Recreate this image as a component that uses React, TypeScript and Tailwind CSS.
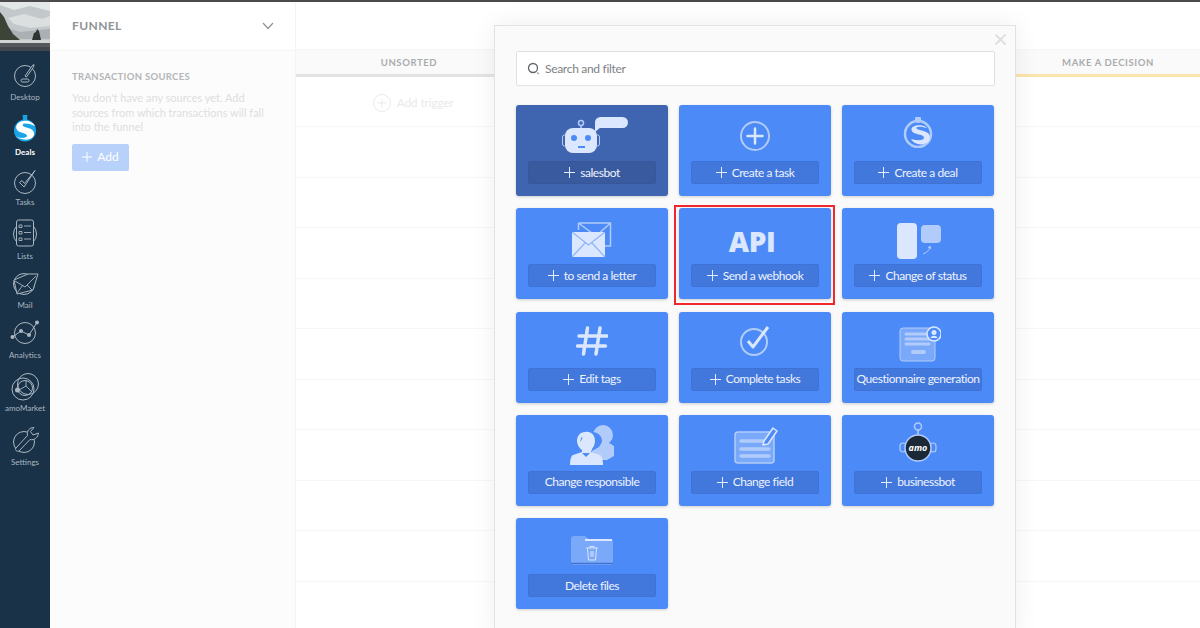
import type { ReactNode } from "react";

const LIGHT = "#dbe7fe";
const MID = "#b1cbfb";

function Glyph({ size = 34, children, w, h }: { size?: number; w?: number; h?: number; children: ReactNode }) {
  const vw = w ?? size;
  const vh = h ?? size;
  return <svg width={vw} height={vh} viewBox={`0 0 ${vw} ${vh}`} fill="none">{children}</svg>;
}

// left rail icons, all thin outline on the navy
const RAIL = "#a9b7c2";
const railIcons: Record<string, ReactNode> = {
  Desktop: (
    <Glyph>
      <circle cx="17" cy="19" r="10.500" stroke={RAIL} strokeWidth="1" />
      <path d="M17 19 24 9 26 7.500 25.500 10 18.500 20Z" fill="#1a3247" stroke={RAIL} strokeWidth="1" />
      <rect x="13" y="22" width="8" height="3" rx="1.500" stroke={RAIL} />
    </Glyph>
  ),
  Deals: (
    <Glyph>
      <path d="M14.500 3h5l-.5 3 .5 2h-5l.5-2Z" fill="#19a5e6" />
      <circle cx="17" cy="18.500" r="11" fill="#19a5e6" />
      <path d="M7 24c4 3 13 6 18 1 3-4 0-8-5-9-4-1-6-2-5-4 1-1 6-1 12 2-2-4-7-6-12-5-6 1-9 6-5 10 3 2 9 2 9 5 0 2-7 3-12 0Z" fill="#ffffff" />
    </Glyph>
  ),
  Tasks: (
    <Glyph>
      <g transform="translate(2 3)">
        <circle cx="15" cy="18" r="10.500" stroke={RAIL} />
        <path d="M9.500 17.500 14 22 25 5.500 14.500 18.500 12 15.500Z" stroke={RAIL} strokeLinejoin="round" />
      </g>
    </Glyph>
  ),
  Lists: (
    <Glyph>
      <circle cx="17" cy="18" r="11.500" stroke={RAIL} />
      <rect x="8.500" y="4" width="17" height="26" rx="2" fill="#1a3247" stroke={RAIL} />
      <path d="M11 9h3v2.500h-3ZM11 15.500h3v2.500h-3ZM11 22h3v2.500h-3ZM16 10h7M16 16.500h7M16 23h7" stroke={RAIL} strokeWidth=".9" />
    </Glyph>
  ),
  Mail: (
    <Glyph>
      <g transform="translate(0 3)">
        <circle cx="16" cy="16" r="10.500" stroke={RAIL} />
        <path d="M6 12 20 6h10L25 22 9 26Z" fill="#1a3247" stroke={RAIL} strokeLinejoin="round" />
        <path d="M7 13 17 19 28 8M9 25 15 17M24 22 19 17" stroke={RAIL} strokeWidth=".9" />
      </g>
    </Glyph>
  ),
  Analytics: (
    <Glyph>
      <g transform="translate(0 3)">
        <circle cx="17" cy="15" r="10.500" stroke={RAIL} />
        <path d="M4.500 19 13 13 21 17 29 4.500" stroke={RAIL} />
        <circle cx="4.500" cy="19" r="2" fill={RAIL} />
        <circle cx="13" cy="13" r="2" fill={RAIL} />
        <circle cx="21" cy="17" r="2" fill={RAIL} />
        <circle cx="29" cy="4.500" r="2" fill={RAIL} />
      </g>
    </Glyph>
  ),
  amoMarket: (
    <Glyph>
      <g transform="translate(0 2)">
        <circle cx="15" cy="19" r="11" stroke={RAIL} />
        <circle cx="20" cy="14" r="10.500" stroke={RAIL} />
        <circle cx="17" cy="18" r="7.500" stroke={RAIL} />
        <path d="M11 20 18 16 23 21M18 16V10" stroke={RAIL} strokeWidth=".9" />
        <circle cx="9.500" cy="20" r="2.500" fill={RAIL} />
      </g>
    </Glyph>
  ),
  Settings: (
    <Glyph>
      <g transform="translate(1 1)">
        <circle cx="15" cy="19" r="10.500" stroke={RAIL} />
        <path d="M7 25 18.500 12.500C17.500 8 20.500 4.500 25 4.500L21.500 8.500 24 12 29.500 10C29 14.500 25.500 17.500 21 16.500L10 28C8 29 5.500 27 7 25Z" fill="#1a3247" stroke={RAIL} strokeLinejoin="round" />
      </g>
    </Glyph>
  ),
};

const rail = [
  { label: "Desktop", item: "h-[61px] pt-[6px]", text: "text-[#a9b7c2]" },
  { label: "Deals", item: "h-[50px]", text: "text-white font-bold" },
  { label: "Tasks", item: "h-[54px]", text: "text-[#a9b7c2]" },
  { label: "Lists", item: "h-[49px]", text: "text-[#a9b7c2]" },
  { label: "Mail", item: "h-[50px]", text: "text-[#a9b7c2]" },
  { label: "Analytics", item: "h-[53px]", text: "text-[#a9b7c2]" },
  { label: "amoMarket", item: "h-[54px]", text: "text-[#a9b7c2]" },
  { label: "Settings", item: "h-[50px]", text: "text-[#a9b7c2]" },
];

const cardIcons: Record<string, ReactNode> = {
  robot: (
    <Glyph w={66} h={37}>
      <rect x="33" y="0" width="33" height="11" rx="5.500" fill={LIGHT} />
      <path d="M33 6v9l6-5Z" fill={LIGHT} />
      <circle cx="19" cy="6" r="2.500" stroke={MID} strokeWidth="1.500" />
      <path d="M19 9v3" stroke={MID} strokeWidth="1.500" />
      <rect x="0.500" y="18" width="4" height="11" rx="2" stroke={MID} />
      <rect x="33.500" y="18" width="4" height="11" rx="2" stroke={MID} />
      <rect x="3" y="11" width="32" height="25" rx="8" fill={LIGHT} />
      <circle cx="12" cy="21" r="3" fill="#4c8bf7" />
      <circle cx="26" cy="21" r="3" fill="#4c8bf7" />
      <rect x="16" y="29" width="7" height="2" fill="#4c8bf7" />
    </Glyph>
  ),
  plus: (
    <Glyph w={32} h={32}>
      <circle cx="16" cy="16" r="14" stroke={MID} strokeWidth="2" />
      <path d="M16 8.500v15M8.500 16h15" stroke={LIGHT} strokeWidth="2.500" strokeLinecap="round" />
    </Glyph>
  ),
  dollar: (
    <Glyph w={30} h={31}>
      <rect x="12" y="0" width="6" height="4" rx="1" fill={MID} />
      <rect x="13.500" y="3" width="3" height="3" fill={MID} />
      <circle cx="15" cy="17" r="13" stroke={MID} strokeWidth="2.500" />
      <path d="M23 10C18 7 8 8 8.500 13c.5 5 12 3.500 12.500 7.500.3 3-6 3.500-13 1.500 3 6 13 7.500 18 2 3-6-1-9-7-10.500-4-1-6-1.500-5.500-3 .5-1 5-1.500 10 .5Z" fill={LIGHT} />
    </Glyph>
  ),
  letter: (
    <Glyph w={40} h={36}>
      <path d="M6.500 1h32v23h-6M6.500 1v7M6.500 1 24 14 38.500 1" stroke={MID} strokeWidth="1.500" />
      <rect x="0" y="10" width="33" height="25" fill={LIGHT} />
      <path d="M0 10 16.500 23 33 10M0 35 13 21M33 35 20 21" stroke="#8fb4f9" strokeWidth="1.200" />
    </Glyph>
  ),
  api: <span className="font-['Open_Sans',sans-serif] text-[28px] font-extrabold leading-none tracking-[-0.5px] text-[#dbe7fe]">API</span>,
  status: (
    <Glyph w={44} h={36}>
      <rect x="0" y="0" width="20" height="36" rx="4" fill={LIGHT} />
      <rect x="24" y="2" width="20" height="18" rx="4" fill={MID} />
      <path d="M26 31c3-1 6-3 7-7M31 25l2-2 1 3" stroke={MID} strokeWidth="1" />
    </Glyph>
  ),
  hash: (
    <Glyph w={32} h={30}>
      <path d="M11.500 2 7.500 28M24 2 20 28M3 10h28M1.500 20h28" stroke={LIGHT} strokeWidth="3.500" strokeLinecap="round" />
    </Glyph>
  ),
  check: (
    <Glyph w={32} h={30}>
      <circle cx="15" cy="16" r="13" stroke={MID} strokeWidth="2" />
      <path d="M9 15 14 21 29 1" stroke={LIGHT} strokeWidth="3" strokeLinejoin="round" />
    </Glyph>
  ),
  form: (
    <Glyph w={42} h={36}>
      <rect x="1" y="2" width="35" height="33" rx="3" fill="#7ba9f9" stroke={MID} strokeWidth="1" />
      <path d="M7 8h21M7 13h23M7 18h23" stroke={MID} strokeWidth="3" strokeLinecap="round" />
      <rect x="12" y="24" width="15" height="4" rx="2" fill={MID} />
      <circle cx="35" cy="8" r="7" fill="#4c8bf7" stroke={LIGHT} strokeWidth="1.500" />
      <circle cx="35" cy="6.500" r="2.500" fill={LIGHT} />
      <path d="M31.500 12c1-3 6-3 7 0Z" fill={LIGHT} />
    </Glyph>
  ),
  people: (
    <Glyph w={44} h={40}>
      <circle cx="33" cy="10" r="10" fill={MID} />
      <path d="M30 16h6l8 5v10l-7 4H26l-6-12Z" fill={MID} />
      <path d="M22 7c6 0 10 4 10 9 0 2-2 4-3 6l-7 4Z" fill="#4c8bf7" />
      <path d="M15 7c6-1 10 3 10 9 0 4-2 7-4 9v2l9 3c2 1 3 5 3 10H0c0-5 1-9 3-10l9-3v-2c-3-2-5-6-5-9 0-5 3-9 8-9Z" fill={LIGHT} />
      <path d="M10 17c1-3 1-5 2-5s0 3-2 5ZM16 32l-4-4h8Z" fill="#4c8bf7" />
    </Glyph>
  ),
  field: (
    <Glyph w={44} h={38}>
      <rect x="1" y="6" width="39" height="31" rx="3" fill="#7ba9f9" stroke={MID} strokeWidth="1.500" />
      <path d="M7 15h22M7 23h28M7 30h28" stroke={MID} strokeWidth="3.500" strokeLinecap="round" />
      <path d="M30 15 39 2l4 3-9 13-5 1Z" fill="#4c8bf7" stroke={LIGHT} strokeWidth="1.500" strokeLinejoin="round" />
    </Glyph>
  ),
  amo: (
    <Glyph w={38} h={42}>
      <circle cx="19" cy="4.500" r="3.500" stroke={MID} strokeWidth="1.500" />
      <path d="M19 8v6" stroke={MID} strokeWidth="1.500" />
      <rect x="1" y="21" width="6" height="9" rx="3" stroke={MID} strokeWidth="1.200" />
      <rect x="31" y="21" width="6" height="9" rx="3" stroke={MID} strokeWidth="1.200" />
      <circle cx="19" cy="26" r="13" fill="#1b2a36" stroke={MID} strokeWidth="1.500" />
      <text x="19" y="29" textAnchor="middle" fontSize="9" fontWeight="700" fontStyle="italic" fill="#fff" fontFamily="'Open Sans', sans-serif">amo</text>
    </Glyph>
  ),
  folder: (
    <Glyph w={42} h={29}>
      <path d="M0 3q0-3 3-3h11l4 3h21q3 0 3 3v21q0 2-2 2H2q-2 0-2-2Z" fill="#7ba9f9" />
      <path d="M0 27.500h42" stroke="#3f72d4" strokeWidth="1.500" />
      <path d="M14 4h27" stroke={LIGHT} strokeWidth="2" />
      <path d="M15 12h12M19 12v-1.500h4V12M16.500 12.500l1 11.500h7l1-11.500M20 15v6M22 15v6" stroke={LIGHT} strokeWidth="1" />
    </Glyph>
  ),
};

const cards = [
  { icon: "robot", label: "salesbot", plus: true, dark: true, iconClass: "pl-[6px] pt-[12px]" },
  { icon: "plus", label: "Create a task", plus: true, iconClass: "pt-[15px]" },
  { icon: "dollar", label: "Create a deal", plus: true, iconClass: "pt-[12px]" },
  { icon: "letter", label: "to send a letter", plus: true, iconClass: "pt-[14px]" },
  { icon: "api", label: "Send a webhook", plus: true, marked: true, iconClass: "pt-[19px] pr-[6px]" },
  { icon: "status", label: "Change of status", plus: true, iconClass: "pt-[15px] pl-[2px]" },
  { icon: "hash", label: "Edit tags", plus: true, iconClass: "pt-[14px]" },
  { icon: "check", label: "Complete tasks", plus: true, iconClass: "pt-[14px]" },
  { icon: "form", label: "Questionnaire generation", plus: false, iconClass: "pt-[14px] pl-[4px]" },
  { icon: "people", label: "Change responsible", plus: false, iconClass: "pt-[10px]" },
  { icon: "field", label: "Change field", plus: true, iconClass: "pt-[11px] pl-[2px]" },
  { icon: "amo", label: "businessbot", plus: true, iconClass: "pt-[7px]" },
  { icon: "folder", label: "Delete files", plus: false, iconClass: "pt-[18px]" },
];

function Card({ icon, label, plus, dark, marked, iconClass }: (typeof cards)[number] & { dark?: boolean; marked?: boolean }) {
  return (
    <div className={`relative flex h-[91px] flex-col justify-between rounded-[3px] px-[12px] pb-[12px] shadow-[0_1px_3px_rgba(0,0,0,0.18)] ${dark ? "bg-[#4065b0]" : "bg-[#4c8bf7]"}`}>
      <div className={`flex justify-center ${iconClass}`}>{cardIcons[icon]}</div>
      <div className={`flex h-[23px] items-center justify-center gap-[5px] rounded-[2px] border text-[12px] tracking-[-0.45px] text-[#eef3fe] ${dark ? "border-[#38579a] bg-[#3a5a9f]" : "border-[#3f72d6] bg-[#4277dc]"}`}>
        {plus && (
          <svg width="11" height="11" viewBox="0 0 11 11">
            <path d="M5.500 0v11M0 5.500h11" stroke="#e4ecfd" strokeWidth="1" />
          </svg>
        )}
        <span className="whitespace-nowrap">{label}</span>
      </div>
      {marked && <div className="absolute -left-[5px] -right-[4px] -top-[3px] -bottom-[6px] border-2 border-[#f0282d]" />}
    </div>
  );
}

export default function App() {
  return (
    <div className="relative h-[628px] w-[1200px] overflow-hidden bg-white font-['Lato','Liberation_Sans',sans-serif]">
      <div className="h-[2px] bg-[#4a4a4a]" />
      <div className="flex h-[626px]">
        {/* rail */}
        <div className="flex w-[50px] shrink-0 flex-col bg-[#1a3247]">
          <svg width="50" height="49" viewBox="0 0 50 49" className="shrink-0">
            <rect width="50" height="49" fill="#c3c8ca" />
            <path d="M0 3 14 8 30 4 50 9V0H0Z" fill="#e4e7e8" />
            <path d="M8 16 24 12 42 17 50 14V24L30 26 14 22Z" fill="#dcdfe0" />
            <path d="M0 24 20 30 50 27V37H0Z" fill="#aab0b3" />
            <path d="M0 10 4 15 8 24 13 32 20 38H0Z" fill="#3c4437" />
            <path d="M32 38 34 31 36 30 37 27 39 29 41 38Z" fill="#2e3334" />
            <rect y="38" width="50" height="3" fill="#d0d4d5" />
            <rect y="41" width="50" height="8" fill="#55585c" />
            <rect y="45" width="50" height="4" fill="#43464a" />
          </svg>
          {rail.map((r) => (
            <div key={r.label} className={`flex flex-col items-center ${r.item}`}>
              <div className="h-[34px] w-[34px] shrink-0">{railIcons[r.label]}</div>
              <span className={`mt-[1px] whitespace-nowrap text-[8px] leading-[10px] ${r.text}`}>{r.label}</span>
            </div>
          ))}
        </div>

        {/* funnel panel */}
        <div className="flex w-[246px] shrink-0 flex-col border-r border-[#f2f3f4] bg-[#fcfcfc]">
          <div className="flex h-[49px] shrink-0 items-center justify-between border-b border-[#f4f5f5] bg-white pl-[22px] pr-[21px]">
            <span className="text-[12px] font-bold tracking-[0.4px] text-[#8f9396]">FUNNEL</span>
            <svg width="12" height="8" viewBox="0 0 12 8" fill="none"><path d="M1 1 6 6.500 11 1" stroke="#8f9396" strokeWidth="1.200" /></svg>
          </div>
          <div className="px-[22px] pt-[20px]">
            <div className="whitespace-nowrap text-[9.500px] font-bold leading-[12px] tracking-[0.3px] text-[#b3b6b8]">TRANSACTION SOURCES</div>
            <p className="mt-[8px] w-[205px] text-[11px] leading-[14.500px] text-[#dcdee0]">You don't have any sources yet. Add sources from which transactions will fall into the funnel</p>
            <div className="mt-[9px] flex h-[27px] w-[57px] items-center justify-center gap-[5px] rounded-[2px] bg-[#b8d1fb] text-[12px] text-white">
              <svg width="10" height="10" viewBox="0 0 10 10"><path d="M5 0v10M0 5h10" stroke="#fff" strokeWidth="1" /></svg>
              Add
            </div>
          </div>
        </div>

        {/* board */}
        <div className="flex min-w-0 flex-1 flex-col">
          <div className="h-[48px] shrink-0 border-b border-[#f6f6f6] bg-white" />
          <div className="flex h-[27px] shrink-0 bg-[#fafafa] text-[9.500px] font-bold tracking-[0.6px] text-[#a9acae]">
            <div className="flex w-[226px] items-center justify-center border-b-[3px] border-[#e3e3e3] pt-[2px]">UNSORTED</div>
            <div className="flex-1 border-b-[3px] border-[#e3e3e3]" />
            <div className="flex w-[184px] items-center justify-center border-b-[3px] border-[#fde3ae] pt-[2px]">MAKE A DECISION</div>
          </div>
          <div className="flex h-[50px] shrink-0 items-center border-b border-[#f7f7f7] pl-[77px] pt-[2px] text-[11.500px] text-[#e8e9ea]">
            <svg width="18" height="18" viewBox="0 0 18 18" fill="none" className="mr-[6px]">
              <circle cx="9" cy="9" r="8.500" stroke="#e8e9ea" />
              <path d="M9 4.500v9M4.500 9h9" stroke="#e8e9ea" />
            </svg>
            Add trigger
          </div>
          {[0, 1, 2, 3, 4, 5, 6, 7, 8].map((i) => (
            <div key={i} className="h-[50.500px] shrink-0 border-b border-[#f7f7f7]" />
          ))}
        </div>
      </div>

      {/* add-action dialog */}
      <div className="absolute left-[494px] top-[25px] h-[610px] w-[522px] border border-[#e0e3e3] bg-[#fafafa] px-[21px] pt-[25px] shadow-[0_0_24px_rgba(0,0,0,0.07)]">
        <svg width="11" height="11" viewBox="0 0 11 11" className="absolute right-[9px] top-[8px]">
          <path d="M.5.500l10 10M10.500.500l-10 10" stroke="#dcdcdc" strokeWidth="1.800" />
        </svg>
        <div className="flex h-[35px] w-[479px] items-center gap-[4px] rounded-[2px] border border-[#dfe1e2] bg-white pl-[10px] text-[12px] tracking-[-0.3px] text-[#7d8285]">
          <svg width="14" height="14" viewBox="0 0 14 14" fill="none">
            <circle cx="6" cy="6" r="4.500" stroke="#5f6468" strokeWidth="1.300" />
            <path d="M10 10.500l2 1.500" stroke="#9ea2a5" strokeWidth="1.200" />
          </svg>
          Search and filter
        </div>
        <div className="mt-[19.300px] grid w-[478px] grid-cols-[152px_152px_152px] gap-x-[11px] gap-y-[12.200px]">
          {cards.map((c) => <Card key={c.label} {...c} />)}
        </div>
      </div>
    </div>
  );
}
